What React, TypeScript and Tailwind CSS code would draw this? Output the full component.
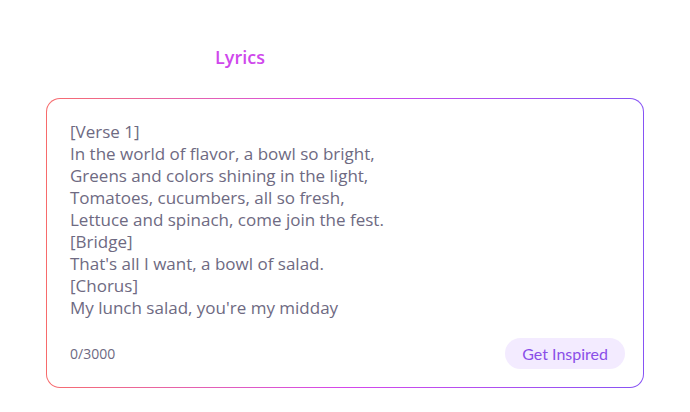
const lyrics = [
  "[Verse 1]",
  "In the world of flavor, a bowl so bright,",
  "Greens and colors shining in the light,",
  "Tomatoes, cucumbers, all so fresh,",
  "Lettuce and spinach, come join the fest.",
  "[Bridge]",
  "That's all I want, a bowl of salad.",
  "[Chorus]",
  "My lunch salad, you're my midday",
];

export default function App() {
  return (
    <div className="min-h-screen bg-white px-[46px] pt-[44px] font-['Open_Sans',sans-serif]">
      <div className="w-[388px] text-center">
        <h1 className="text-[18px] font-semibold leading-[26px] text-[#cf48ec]">Lyrics</h1>
      </div>
      <div className="mt-[28px] w-[598px] rounded-[14px] bg-gradient-to-r from-[#f76b6b] via-[#d546ec] to-[#8652f4] p-px">
        <div className="flex h-[288px] flex-col rounded-[13px] bg-white pl-[23px] pr-[18px] pt-[22px] pb-[18px]">
          <div className="flex-1 text-[17px] leading-[22px] text-[#6e6a82]">
            {lyrics.map((line) => (
              <div key={line}>{line}</div>
            ))}
          </div>
          <div className="flex items-center justify-between">
            <span className="text-[14px] text-[#6e6a82]">0/3000</span>
            <button className="h-[31px] rounded-full bg-[#f3ebff] px-[17px] font-['Lato',sans-serif] text-[16px] text-[#8a4fe8]">
              Get Inspired
            </button>
          </div>
        </div>
      </div>
    </div>
  );
}
